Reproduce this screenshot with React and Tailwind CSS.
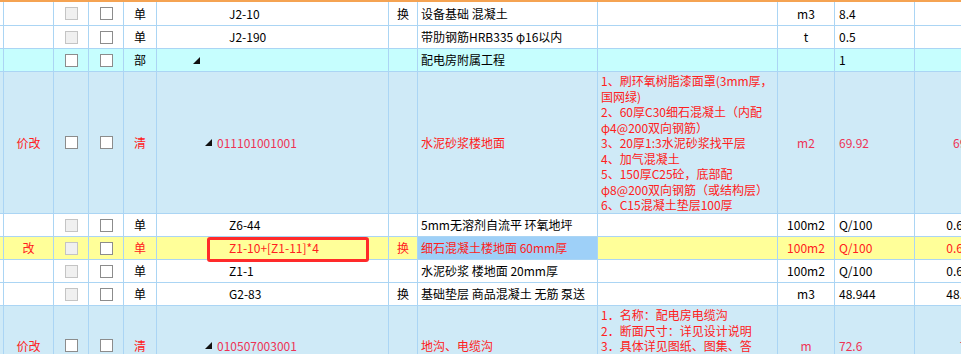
import React from 'react';

const GRID =
  'grid grid-cols-[4px_50px_35px_35px_33px_232px_29px_180px_180px_57px_80px_73px]';
const CELL =
  'border-r border-b border-[#abd5f4] flex items-center overflow-hidden whitespace-nowrap';

const RED = 'text-[#ff2020]';
const PINK = 'text-[#ee3355]';

function Box({ disabled }) {
  return (
    <span
      className={
        disabled
          ? 'w-[13px] h-[13px] border border-[#c4c4c4] bg-[#f0f0f0]'
          : 'w-[13px] h-[13px] border border-[#8c8c8c] bg-white'
      }
    />
  );
}

function Tri() {
  return (
    <svg width="7" height="7" viewBox="0 0 7 7" className="shrink-0">
      <polygon points="7,0 7,7 0,7" fill="#111" />
    </svg>
  );
}

function Row({ bg, h, flag, boxA, kind, kindRed, code, swap, swapRed, desc, descCls, feat, unit, expr, qty, tone, extra }) {
  const color = tone || 'text-black';
  return (
    <div className={`${GRID} ${bg} ${h}`}>
      <div className={CELL} />
      <div className={`${CELL} justify-center ${RED}`}>{flag}</div>
      <div className={`${CELL} justify-center`}>
        <Box disabled={boxA} />
      </div>
      <div className={`${CELL} justify-center`}>
        <Box />
      </div>
      <div className={`${CELL} justify-center ${kindRed ? RED : 'text-black'}`}>{kind}</div>
      <div className={`${CELL} relative overflow-visible`}>{code}{extra}</div>
      <div className={`${CELL} justify-center ${swapRed ? RED : 'text-black'}`}>{swap}</div>
      <div className={`${CELL} pl-[3px] ${descCls || 'text-black'}`}>{desc}</div>
      <div className={`${CELL} pl-[3px] ${RED} leading-[15.5px]`}>
        {feat && (
          <div className="self-start pt-[1px]">
            {feat.map((l) => (
              <div key={l}>{l}</div>
            ))}
          </div>
        )}
      </div>
      <div className={`${CELL} justify-center ${color}`}>{unit}</div>
      <div className={`${CELL} pl-[4px] ${color}`}>{expr}</div>
      <div className={`${CELL} justify-end pr-[4px] ${color}`}>{qty}</div>
    </div>
  );
}

function Code({ level, text, tri, cls }) {
  const pad = { 1: 'pl-[36px]', 2: 'pl-[48px]', 3: 'pl-[72px]' }[level];
  return (
    <div className={`flex items-center gap-[5px] ${pad} ${cls || 'text-black'}`}>
      {tri && <Tri />}
      {text && <span>{text}</span>}
    </div>
  );
}

export default function App() {
  return (
    <div className="w-[961px] h-[354px] overflow-hidden bg-white text-[12px] font-['Noto_Sans_CJK_SC','Noto_Sans',sans-serif]">
      <div className="h-[2px] w-[988px] bg-[#f5a352]" />

      <Row bg="bg-white" h="h-[24px]" boxA kind="单" code={<Code level={3} text="J2-10" />} swap="换"
        desc="设备基础 混凝土" unit="m3" expr="8.4" />
      <Row bg="bg-white" h="h-[23px]" boxA kind="单" code={<Code level={3} text="J2-190" />}
        desc="带肋钢筋HRB335 φ16以内" unit="t" expr="0.5" />
      <Row bg="bg-[#c6fefe]" h="h-[23px]" kind="部" code={<Code level={1} tri />}
        desc="配电房附属工程" expr="1" />
      <Row bg="bg-[#cfeaf7]" h="h-[142px]" flag="价改" kind="清" kindRed
        code={<Code level={2} tri text="011101001001" cls={PINK} />}
        desc="水泥砂浆楼地面" descCls={RED}
        feat={[
          '1、刷环氧树脂漆面罩(3mm厚，',
          '国网绿)',
          '2、60厚C30细石混凝土（内配',
          'φ4@200双向钢筋）',
          '3、20厚1:3水泥砂浆找平层',
          '4、加气混凝土',
          '5、150厚C25砼，底部配',
          'φ8@200双向钢筋（或结构层）',
          '6、C15混凝土垫层100厚',
        ]}
        unit="m2" expr="69.92" qty="69.92" tone={PINK} />
      <Row bg="bg-white" h="h-[23px]" boxA kind="单" code={<Code level={3} text="Z6-44" />}
        desc="5mm无溶剂自流平 环氧地坪" unit="100m2" expr="Q/100" qty="0.6992" />
      <Row bg="bg-[#ffff99]" h="h-[23px]" flag="改" boxA kind="单" kindRed
        code={<Code level={3} text="Z1-10+[Z1-11]*4" cls={RED} />}
        extra={
          <span className="absolute left-[50px] top-0 w-[162px] h-[25px] border-[3px] border-[#ff2a2a] rounded-[3px] z-10" />
        }
        swap="换" swapRed
        desc="细石混凝土楼地面 60mm厚" descCls={`${RED} bg-[#9ed0f8] self-stretch`}
        unit="100m2" expr="Q/100" qty="0.6992" tone={RED} />
      <Row bg="bg-white" h="h-[23px]" boxA kind="单" code={<Code level={3} text="Z1-1" />}
        desc="水泥砂浆 楼地面 20mm厚" unit="100m2" expr="Q/100" qty="0.6992" />
      <Row bg="bg-white" h="h-[23px]" boxA kind="单" code={<Code level={3} text="G2-83" />} swap="换"
        desc="基础垫层 商品混凝土 无筋 泵送" unit="m3" expr="48.944" qty="48.944" />
      <Row bg="bg-[#cfeaf7]" h="h-[80px]" flag="价改" kind="清" kindRed
        code={<Code level={2} tri text="010507003001" cls={PINK} />}
        desc="地沟、电缆沟" descCls={RED}
        feat={[
          '1．名称：配电房电缆沟',
          '2．断面尺寸：详见设计说明',
          '3．具体详见图纸、图集、答',
          '疑等相关文件',
          '4．其他：满足规范要求',
        ]}
        unit="m" expr="72.6" qty="72.6" tone={PINK} />
    </div>
  );
}
